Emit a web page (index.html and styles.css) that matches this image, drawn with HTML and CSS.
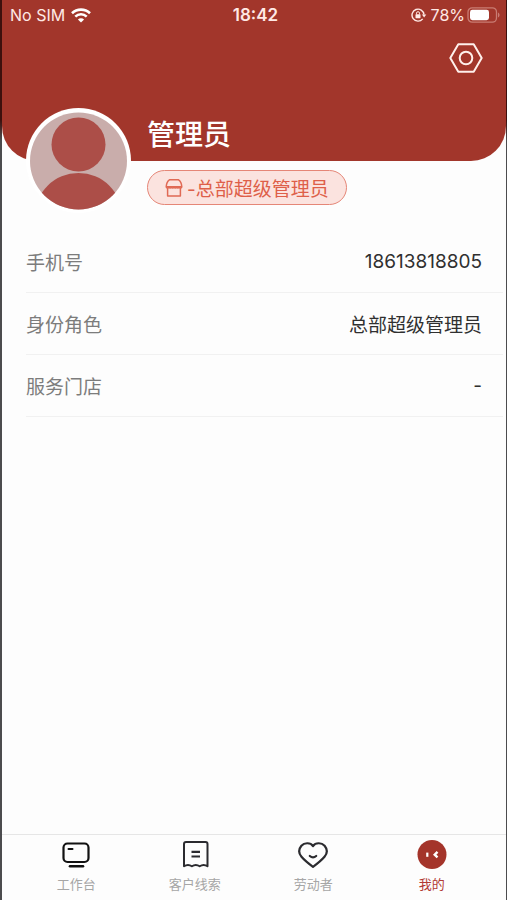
FILE: index.html
```html
<!DOCTYPE html>
<html lang="zh-CN">
<head>
<meta charset="utf-8">
<meta name="viewport" content="width=device-width, initial-scale=1">
<title>我的</title>
<link rel="stylesheet" href="styles.css">
</head>
<body>
<div class="screen">
  <header class="hero">
    <div class="status">
      <div class="status-side">
        <span>No SIM</span>
        <svg class="wifi" viewBox="0 0 20 15" width="20" height="15" fill="none" stroke="#fff" stroke-width="2.6" aria-hidden="true">
          <path d="M1 5.2a13 13 0 0 1 18 0"/>
          <path d="M4.3 8.6a8.2 8.2 0 0 1 11.4 0"/>
          <path d="M10 14.6 6.9 11.5a4.4 4.4 0 0 1 6.2 0z" fill="#fff" stroke="none"/>
        </svg>
      </div>
      <time class="clock">18:42</time>
      <div class="status-side status-right">
        <svg class="lock" viewBox="0 0 16 14" width="16" height="14" fill="none" stroke="#ffe9e5" stroke-width="1.4" aria-hidden="true">
          <path d="M11.7 10.9A6 6 0 1 1 13 6.600"/>
          <path d="M10.900 6.400h4.400l-2.200 3z" fill="#ffe9e5" stroke="none"/>
          <rect x="4.500" y="6.200" width="5" height="4" rx=".6" fill="#ffe9e5" stroke="none"/>
          <path d="M5.500 6.400V5.200a1.500 1.500 0 0 1 3 0v1.200" stroke-width="1"/>
        </svg>
        <span>78%</span>
        <svg class="battery" viewBox="0 0 34 16" width="34" height="16" aria-hidden="true">
          <rect x="1" y=".8" width="28.500" height="14.400" rx="4.200" fill="none" stroke="#c97c73" stroke-width="1.300"/>
          <rect x="3" y="2.800" width="19" height="10.400" rx="2.400" fill="#fff"/>
          <path d="M31 5.500c2 .7 2 4.300 0 5z" fill="#c97c73"/>
        </svg>
      </div>
    </div>
    <div class="actions">
      <button class="settings" type="button" aria-label="设置">
        <svg viewBox="0 0 34 30" width="34" height="30" fill="none" stroke="#fff0ec" stroke-width="2" stroke-linejoin="round" aria-hidden="true">
          <path d="M9.300 1.200h15.400L32.700 15l-8 13.800H9.300L1.300 15z"/>
          <circle cx="17" cy="15" r="6.300"/>
        </svg>
      </button>
    </div>
  </header>

  <section class="profile">
    <svg class="avatar" viewBox="0 0 105 105" width="105" height="105" aria-hidden="true">
      <defs><clipPath id="face"><circle cx="52.500" cy="53" r="48.500"/></clipPath></defs>
      <circle cx="52.500" cy="52.500" r="52.500" fill="#fff"/>
      <g clip-path="url(#face)">
        <rect width="105" height="105" fill="#c9adab"/>
        <circle cx="52.500" cy="36.500" r="27" fill="#ac4e48"/>
        <circle cx="52.500" cy="109" r="44" fill="#ac4e48"/>
      </g>
    </svg>
    <div class="identity">
      <h1 class="name">管理员</h1>
      <div class="badge">
        <svg viewBox="0 0 18 20" width="18" height="20" fill="none" stroke="#e06a55" stroke-width="1.500" stroke-linejoin="round" aria-hidden="true">
          <path d="M4.400 1.800h9.200c1.800 1.200 3 3.500 3.200 7H1.200c.2-3.500 1.400-5.800 3.200-7z"/>
          <path d="M1.200 8.800q1.300 2.400 2.600 0 1.300 2.400 2.600 0 1.300 2.400 2.600 0 1.300 2.400 2.600 0 1.300 2.400 2.600 0 1.300 2.400 2.600 0"/>
          <path d="M2.600 10v8h12.800v-8"/>
        </svg>
        <span>-总部超级管理员</span>
      </div>
    </div>
  </section>

  <main class="details">
    <dl class="list">
      <div class="row"><dt>手机号</dt><dd>18613818805</dd></div>
      <div class="row"><dt>身份角色</dt><dd>总部超级管理员</dd></div>
      <div class="row"><dt>服务门店</dt><dd>-</dd></div>
    </dl>
  </main>

  <nav class="tabs">
    <a class="tab" href="#work">
      <svg viewBox="0 0 30 30" width="30" height="30" fill="none" stroke="#111" stroke-width="2.200" stroke-linecap="round" aria-hidden="true">
        <rect x="2.500" y="3.500" width="25" height="18.500" rx="4"/>
        <path d="M7.500 9h4" stroke-width="2"/>
        <path d="M9 26.300h13" stroke-width="2.600"/>
      </svg>
      <span>工作台</span>
    </a>
    <a class="tab" href="#leads">
      <svg viewBox="0 0 30 30" width="30" height="30" fill="none" stroke="#2b2b2f" stroke-width="2" stroke-linejoin="round" aria-hidden="true">
        <path d="M4 26.300V4Q4 2 6 2H25.500Q27.500 2 27.500 4V26.300Q23.600 23.500 19.700 26.300 15.800 23.500 11.900 26.300 8 23.500 4 26.300z"/>
        <path d="M11.500 11.800h8.500M11.500 16.500h8.500" stroke-width="2.200"/>
      </svg>
      <span>客户线索</span>
    </a>
    <a class="tab" href="#workers">
      <svg viewBox="0 0 30 30" width="30" height="30" fill="none" stroke="#2b2b2f" stroke-width="2.200" stroke-linejoin="round" stroke-linecap="round" aria-hidden="true">
        <path d="M15 6C12.500 2.500 6.500 2.300 3.400 5.700.3 9.500 1 13.800 3.500 16.800c3 3.500 7 6.800 11.500 10 4.500-3.200 8.500-6.500 11.500-10 2.500-3 3.200-7.300.1-11.100C23.500 2.300 17.500 2.500 15 6z"/>
        <path d="M11.800 16q3.200 2.800 6.400 0"/>
      </svg>
      <span>劳动者</span>
    </a>
    <a class="tab tab-active" href="#me" aria-current="page">
      <svg viewBox="0 0 30 30" width="30" height="30" fill="none" stroke="#fff" aria-hidden="true">
        <circle cx="15" cy="14.500" r="14.500" fill="#a4342a" stroke="none"/>
        <path d="M10.300 12.600v4.200" stroke-width="2.200"/>
        <path d="M20.500 11.800 17.700 14.700l2.800 2.600" stroke-width="2.400"/>
      </svg>
      <span>我的</span>
    </a>
  </nav>
</div>
</body>
</html>
```

FILE: styles.css
```css
* {
  box-sizing: border-box;
}

body {
  margin: 0;
  padding: 0 1px 0 2px;
  background: linear-gradient(#3d100d 120px, #4c4c4e 140px);
  font-family: Inter, "Noto Sans CJK SC", sans-serif;
}

.screen {
  display: flex;
  flex-direction: column;
  min-height: 100vh;
  background: #fdfdfd;
}

.hero {
  padding-bottom: 88px;
  border-radius: 0 0 35px 35px;
  background: #a2362b;
  color: #ffe9e5;
}

.status {
  display: grid;
  grid-template-columns: 1fr auto 1fr;
  align-items: center;
  height: 30px;
  padding: 0 5px 0 8px;
  font-size: 16px;
}

.status-side {
  display: flex;
  align-items: center;
  gap: 6px;
}

.status-right {
  justify-content: flex-end;
  gap: 4px;
}

.battery {
  margin-left: -2px;
}

.clock {
  font-size: 17px;
  font-weight: 600;
}

.actions {
  display: flex;
  justify-content: flex-end;
  padding: 13px 23px 0;
}

.settings {
  display: flex;
  padding: 0;
  border: 0;
  background: none;
}

.profile {
  display: flex;
  gap: 16px;
  position: relative;
  margin-top: -53px;
  padding-left: 24px;
}

.identity {
  padding-top: 5px;
}

.name {
  margin: 0 0 13px;
  color: #fff;
  font-size: 28px;
  font-weight: 500;
  line-height: 44px;
}

.badge {
  display: flex;
  align-items: center;
  gap: 4px;
  height: 35px;
  padding: 0 17px;
  border: 1px solid #e58677;
  border-radius: 18px;
  background: #fbe3df;
  color: #de5f49;
  font-size: 19px;
}

.details {
  flex: 1;
  padding: 18px 3px 0 24px;
}

.list {
  margin: 0;
}

.row {
  display: flex;
  align-items: center;
  justify-content: space-between;
  height: 62px;
  padding-right: 21px;
  border-bottom: 1px solid #f1f1f1;
  font-size: 19px;
}

.row dt {
  color: #7c7c7c;
}

.row dd {
  margin: 0;
  color: #303030;
}

.tabs {
  display: grid;
  grid-template-columns: repeat(4, 1fr);
  padding: 5px 15px;
  border-top: 1px solid #e6e6e6;
}

.tab {
  display: flex;
  flex-direction: column;
  align-items: center;
  gap: 3px;
  color: #a6a6a6;
  font-size: 13px;
  line-height: 22px;
  text-decoration: none;
}

.tab-active {
  color: #b23a34;
}
```
